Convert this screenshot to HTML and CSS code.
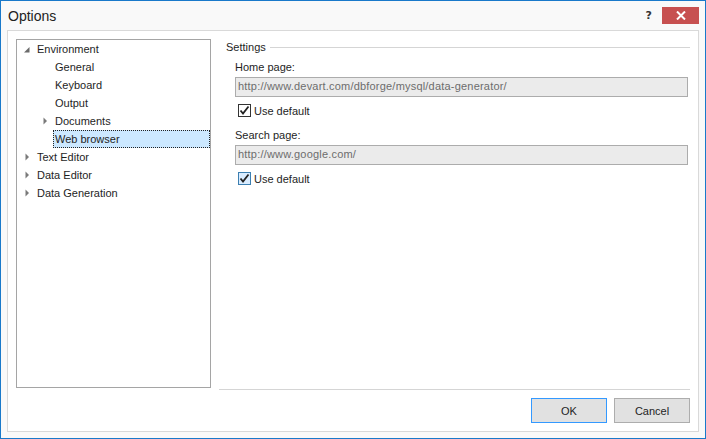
FILE: index.html
```html
<!DOCTYPE html>
<html>
<head>
<meta charset="utf-8">
<link rel="stylesheet" href="styles.css">
</head>
<body>
<div class="window">
  <div class="titlebar">
    <div class="title">Options</div>
    <div class="help">?</div>
    <div class="close">
      <svg width="10" height="9" viewBox="0 0 10 9"><path d="M1 0.5 L9 8.5 M9 0.5 L1 8.5" stroke="#fff" stroke-width="2"/></svg>
    </div>
  </div>
  <div class="panel">
    <div class="tree">
      <div class="row">
        <span class="exp"><svg width="18" height="18" viewBox="0 0 18 18"><path d="M12.5 7 L12.5 12.5 L7 12.5 Z" fill="#6b6b6b"/></svg></span>
        <span class="label">Environment</span>
      </div>
      <div class="row l1"><span class="exp"></span><span class="label">General</span></div>
      <div class="row l1"><span class="exp"></span><span class="label">Keyboard</span></div>
      <div class="row l1"><span class="exp"></span><span class="label">Output</span></div>
      <div class="row l1">
        <span class="exp"><svg width="18" height="18" viewBox="0 0 18 18"><path d="M8.5 5.5 L12 9 L8.5 12.5 Z" fill="#7a7a7a"/></svg></span>
        <span class="label">Documents</span>
      </div>
      <div class="row l1"><span class="exp"></span><span class="label selected">Web browser</span></div>
      <div class="row">
        <span class="exp"><svg width="18" height="18" viewBox="0 0 18 18"><path d="M8.5 5.5 L12 9 L8.5 12.5 Z" fill="#7a7a7a"/></svg></span>
        <span class="label">Text Editor</span>
      </div>
      <div class="row">
        <span class="exp"><svg width="18" height="18" viewBox="0 0 18 18"><path d="M8.5 5.5 L12 9 L8.5 12.5 Z" fill="#7a7a7a"/></svg></span>
        <span class="label">Data Editor</span>
      </div>
      <div class="row">
        <span class="exp"><svg width="18" height="18" viewBox="0 0 18 18"><path d="M8.5 5.5 L12 9 L8.5 12.5 Z" fill="#7a7a7a"/></svg></span>
        <span class="label">Data Generation</span>
      </div>
    </div>
    <div class="settings">
      <div class="group-head"><span>Settings</span><div class="line"></div></div>
      <div class="field first">
        <div class="flabel">Home page:</div>
        <div class="input">http://www.devart.com/dbforge/mysql/data-generator/</div>
        <div class="check">
          <span class="box"><svg width="11" height="11" viewBox="0 0 11 11"><path d="M1.5 5.5 L4 8.5 L9.5 1.5" stroke="#222" stroke-width="1.8" fill="none"/></svg></span>
          <span>Use default</span>
        </div>
      </div>
      <div class="field second">
        <div class="flabel">Search page:</div>
        <div class="input">http://www.google.com/</div>
        <div class="check">
          <span class="box hover"><svg width="11" height="11" viewBox="0 0 11 11"><path d="M1.5 5.5 L4 8.5 L9.5 1.5" stroke="#222" stroke-width="1.8" fill="none"/></svg></span>
          <span>Use default</span>
        </div>
      </div>
    </div>
    <div class="spacer"></div>
    <div class="buttons">
      <div class="btn default">OK</div>
      <div class="btn">Cancel</div>
    </div>
  </div>
</div>
</body>
</html>
```
FILE: styles.css
```css
* { box-sizing: border-box; }
html, body { margin: 0; padding: 0; }
body {
  width: 706px;
  height: 439px;
  font-family: "Liberation Sans", Arial, sans-serif;
  font-size: 11px;
  color: #1e1e1e;
  overflow: hidden;
}
.window {
  width: 706px;
  height: 439px;
  border: 1px solid #1979ca;
  background: #f9f9f9;
  display: flex;
  flex-direction: column;
}
.titlebar {
  height: 29px;
  display: flex;
  align-items: flex-start;
  flex-shrink: 0;
}
.title {
  font-size: 14px;
  color: #222;
  margin: 7px 0 0 7px;
  flex: 1;
}
.help {
  font-family: "DejaVu Sans", sans-serif;
  font-weight: bold;
  font-size: 11px;
  color: #333;
  margin: 8px 10px 0 0;
}
.close {
  width: 37px;
  height: 17px;
  background: #c75050;
  margin: 6px 6px 0 0;
  display: flex;
  align-items: center;
  justify-content: center;
}
.panel {
  flex: 1;
  margin: 0 6px 6px 6px;
  background: #fff;
  border: 1px solid #d9d9d9;
  padding: 8px 8px 8px 8px;
  display: grid;
  grid-template-columns: 195px 1fr;
  grid-template-rows: 350px 1px auto;
  column-gap: 8px;
}
.tree {
  grid-column: 1;
  grid-row: 1;
  height: 349px;
  border: 1px solid #a5a5a5;
}
.row {
  height: 18px;
  display: flex;
  align-items: stretch;
  line-height: 16px;
}
.row.l1 { padding-left: 18px; }
.exp {
  width: 18px;
  flex-shrink: 0;
}
.exp svg { display: block; }
.label {
  flex: 1;
  padding: 0 2px 0 1px;
  border: 1px solid transparent;
  white-space: nowrap;
}
.label.selected {
  background: #cce8ff;
  border: 1px dotted #222;
}
.settings {
  grid-column: 2;
  grid-row: 1;
  padding-top: 2px;
}
.group-head {
  display: flex;
  align-items: center;
  padding-left: 7px;
  height: 12px;
}
.group-head span { margin-right: 4px; }
.group-head .line {
  flex: 1;
  height: 1px;
  background: #d5d5d5;
  margin-top: 1px;
}
.field {
  padding-left: 16px;
}
.field.first { padding-top: 7px; }
.field.second { padding-top: 11px; }
.flabel {
  height: 14px;
  line-height: 14px;
}
.input {
  margin-top: 3px;
  height: 20px;
  width: 453px;
  background: #ebebeb;
  border: 1px solid #acacac;
  color: #6d6d6d;
  padding-left: 2px;
  line-height: 17px;
  letter-spacing: 0.2px;
  white-space: nowrap;
  overflow: hidden;
}
.check {
  display: flex;
  align-items: center;
  margin-top: 7px;
  padding-left: 3px;
  height: 13px;
}
.box {
  width: 13px;
  height: 13px;
  border: 1px solid #333;
  background: #fff;
  margin-right: 3px;
  display: flex;
  align-items: center;
  justify-content: center;
}
.box.hover {
  background: #d9ecff;
  border-color: #3c7fb1;
}
.spacer {
  grid-column: 2;
  grid-row: 2;
  background: #d5d5d5;
  height: 1px;
}
.buttons {
  grid-column: 2;
  grid-row: 3;
  padding-top: 8px;
  display: flex;
  justify-content: flex-end;
  gap: 7px;
}
.btn {
  width: 76px;
  height: 25px;
  background: #e1e1e1;
  border: 1px solid #adadad;
  display: flex;
  align-items: center;
  justify-content: center;
  font-size: 11px;
}
.btn.default {
  border-color: #3399ff;
}
```
